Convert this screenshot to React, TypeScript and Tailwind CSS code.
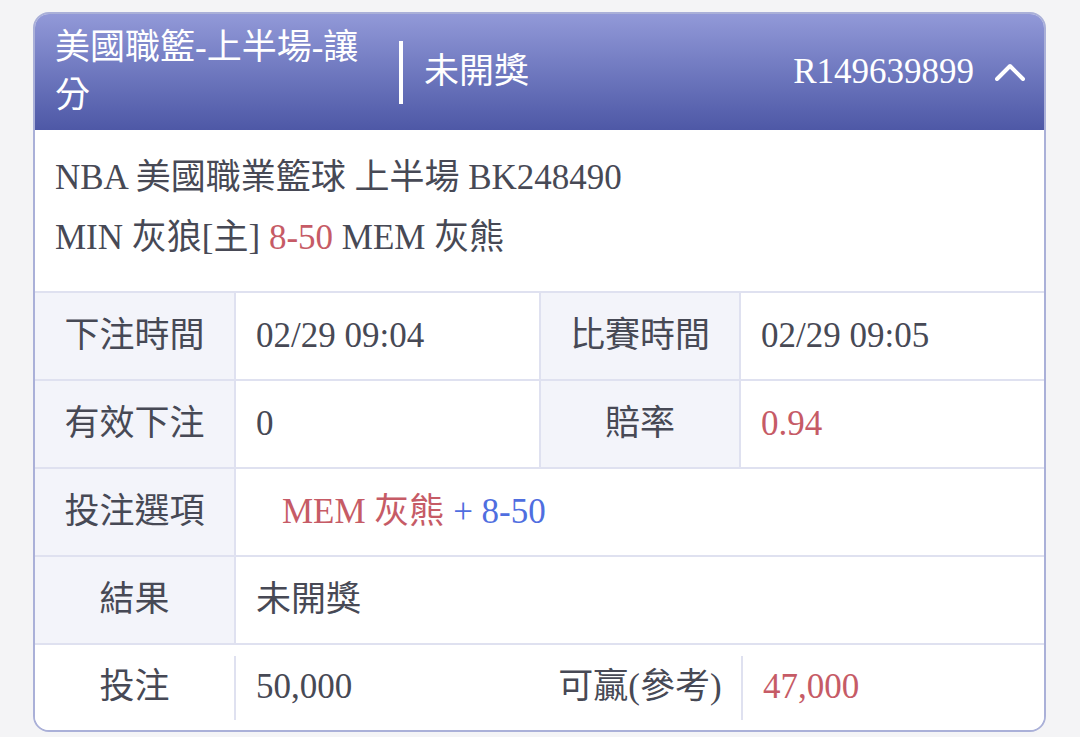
const font = { fontFamily: '"Liberation Serif", "Noto Sans CJK TC", serif' };

function Label({ children, className = "" }: { children: React.ReactNode; className?: string }) {
  return (
    <div className={`bg-[#f3f4fa] flex items-center justify-center text-[#474955] ${className}`}>{children}</div>
  );
}

function Value({ children, className = "" }: { children: React.ReactNode; className?: string }) {
  return <div className={`bg-white flex items-center pl-5 text-[#474955] ${className}`}>{children}</div>;
}

export default function App() {
  return (
    <div className="w-[1080px] h-[737px] bg-[#f4f4f6] overflow-hidden pt-[12px]" style={font}>
      <div className="ml-[33px] w-[1013px] border-2 border-[#aab0d8] rounded-[16px] overflow-hidden bg-white text-[35px]">
        {/* header */}
        <div className="bg-linear-to-b from-[#9299d8] to-[#4e58a6] flex items-center text-white pl-[20px] pr-[19px] py-[10px]">
          <div className="w-[322px] leading-[48px]">美國職籃-上半場-讓分</div>
          <div className="w-[4px] h-[63px] bg-white ml-[22px]" />
          <div className="ml-[21px]">未開獎</div>
          <div className="ml-auto">R149639899</div>
          <svg className="ml-[21px]" width="30" height="18" viewBox="0 0 30 18" fill="none">
            <polyline points="2,16 15,3 28,16" stroke="white" strokeWidth="4" strokeLinecap="round" strokeLinejoin="round" />
          </svg>
        </div>

        {/* match info */}
        <div className="px-[20px] pt-[18px] pb-[23px] leading-[60px] text-[#474955]">
          <div>NBA 美國職業籃球 上半場 BK248490</div>
          <div>
            MIN 灰狼[主] <span className="text-[#c65b66]">8-50</span> MEM 灰熊
          </div>
        </div>

        {/* detail table */}
        <div className="grid grid-cols-[199px_303px_198px_1fr] auto-rows-[86px] gap-[2px] bg-[#dfe1f0] border-t-2 border-[#dfe1f0]">
          <Label>下注時間</Label>
          <Value>02/29 09:04</Value>
          <Label>比賽時間</Label>
          <Value>02/29 09:05</Value>

          <Label>有效下注</Label>
          <Value>0</Value>
          <Label>賠率</Label>
          <Value className="text-[#c65b66]">0.94</Value>

          <Label>投注選項</Label>
          <Value className="col-span-3 pl-[46px]">
            <span className="text-[#c65b66]">MEM 灰熊</span>
            <span className="text-[#4f6ee0]">&nbsp;+ 8-50</span>
          </Value>

          <Label>結果</Label>
          <Value className="col-span-3">未開獎</Value>
        </div>

        <div className="flex items-center h-[87px] bg-white border-t-2 border-[#dfe1f0] text-[#474955]">
          <div className="w-[199px] text-center">投注</div>
          <div className="w-[2px] h-[64px] bg-[#dfe1f0]" />
          <div className="w-[303px] pl-5">50,000</div>
          <div className="w-[202px] text-center">可贏(參考)</div>
          <div className="w-[2px] h-[64px] bg-[#dfe1f0]" />
          <div className="pl-5 text-[#c65b66]">47,000</div>
        </div>
      </div>
    </div>
  );
}
